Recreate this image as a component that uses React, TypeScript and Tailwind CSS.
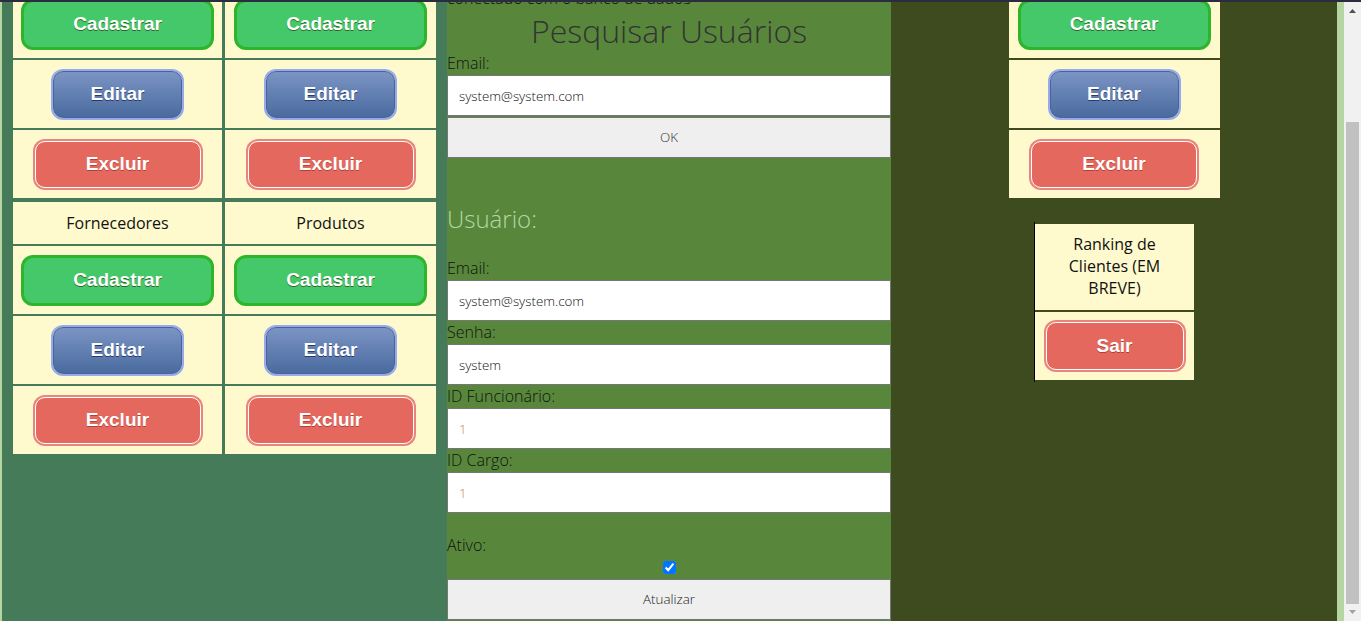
import { useLayoutEffect, useRef } from 'react';

const openSans = "font-['Open_Sans',sans-serif]";
const arial = "font-['Liberation_Sans',Arial,sans-serif]";

function Cadastrar() {
  return (
    <button
      className={`${arial} w-[193px] h-[51px] rounded-[12px] border-[3px] border-[#2eb52c] bg-[#45c869] text-white text-[19px] font-bold [text-shadow:0_1px_0_#2f6627]`}
    >
      Cadastrar
    </button>
  );
}

function Editar() {
  return (
    <button
      className={`${arial} w-[129px] h-[47px] rounded-[10px] border border-[#4e6096] bg-gradient-to-b from-[#7b94c4] to-[#4a6b9f] shadow-[0_0_0_2px_#93acef] text-white text-[19px] font-bold [text-shadow:0_1px_0_#283966]`}
    >
      Editar
    </button>
  );
}

function Vermelho({ label, w }: { label: string; w: string }) {
  return (
    <button
      className={`${arial} ${w} rounded-[10px] border border-white bg-[#e4685d] shadow-[0_0_0_2px_#ea857d] text-white text-[19px] font-bold [text-shadow:0_1px_0_#b23e35]`}
    >
      {label}
    </button>
  );
}

function Cell({ children, h }: { children: React.ReactNode; h: string }) {
  return (
    <div className={`bg-[#fffacd] ${h} flex items-center justify-center text-center`}>{children}</div>
  );
}

function Grupo({ titulos }: { titulos: string[] }) {
  return (
    <div className="grid grid-cols-[209px_211px] gap-x-[3px] gap-y-[2px] p-[2px]">
      {titulos.map((t) => (
        <Cell key={t} h="h-[42px]">
          <span className={`${openSans} text-[16px] text-[#111]`}>{t}</span>
        </Cell>
      ))}
      {titulos.map((t) => (
        <Cell key={t + 'c'} h="h-[68px]">
          <Cadastrar />
        </Cell>
      ))}
      {titulos.map((t) => (
        <Cell key={t + 'e'} h="h-[68px]">
          <Editar />
        </Cell>
      ))}
      {titulos.map((t) => (
        <Cell key={t + 'x'} h="h-[68px]">
          <Vermelho label="Excluir" w="w-[166px] h-[47px]" />
        </Cell>
      ))}
    </div>
  );
}

function Campo({ label, value, numero }: { label: string; value: string; numero?: boolean }) {
  return (
    <>
      <label className="block text-[16px] leading-[23px] font-light text-[#111]">{label}</label>
      <input
        readOnly
        value={value}
        className={`block w-full h-[41px] bg-white border border-[#767676] pl-[11px] text-[13.33px] font-light outline-none ${openSans} ${numero ? 'text-[#c98a4a]' : 'text-[#111]'}`}
      />
    </>
  );
}

function Seta({ cima }: { cima?: boolean }) {
  return (
    <svg width="7" height="4" viewBox="0 0 7 4">
      {cima ? <path d="M0 4 L3.5 0 L7 4 Z" fill="#505050" /> : <path d="M0 0 L7 0 L3.5 4 Z" fill="#a3a3a3" />}
    </svg>
  );
}

export default function App() {
  const scroller = useRef<HTMLDivElement>(null);

  useLayoutEffect(() => {
    if (scroller.current) scroller.current.scrollTop = 135;
  }, []);

  return (
    <div className="w-[1361px] h-[621px] overflow-hidden">
      <div className="h-[2px] bg-[#2b2c40]" />
      <div className="flex h-[619px]">
        <div ref={scroller} className="w-[1344px] h-full overflow-hidden bg-[#b5d6a0]">
          <div className="flex pl-[2px]">
            {/* menu esquerdo */}
            <div className="w-[445px] bg-[#467b5a] pt-[77px] px-[9px]">
              <Grupo titulos={['Clientes', 'Funcionários']} />
              <Grupo titulos={['Fornecedores', 'Produtos']} />
            </div>

            {/* pesquisa */}
            <div className={`w-[444px] bg-[#58873c] pt-[120px] pb-[1px] ${openSans}`}>
              <p className="text-[16px] leading-[22px] font-light text-[#111]">conectado com o banco de dados</p>
              <h1 className="text-[32px] leading-[43px] font-light text-center text-[#333]">Pesquisar Usuários</h1>
              <Campo label="Email:" value="system@system.com" />
              <button className="block w-full mt-[1px] h-[41px] bg-[#efefef] border border-[#767676] text-[13.33px] font-light text-[#333]">
                OK
              </button>

              <h2 className="mt-[44px] text-[24px] leading-[33px] font-light text-[#b5d6a0]">Usuário:</h2>
              <div className="mt-[22px]">
                <Campo label="Email:" value="system@system.com" />
                <Campo label="Senha:" value="system" />
                <Campo label="ID Funcionário:" value="1" numero />
                <Campo label="ID Cargo:" value="1" numero />
              </div>
              <label className="block mt-[21px] text-[16px] leading-[23px] font-light text-[#111]">Ativo:</label>
              <div className="h-[22px] flex justify-center">
                <input type="checkbox" defaultChecked className="mt-[4px] w-[13px] h-[13px] accent-[#0075ff]" />
              </div>
              <button className="block w-full h-[41px] bg-[#efefef] border border-[#767676] text-[13.33px] font-light text-[#222]">
                Atualizar
              </button>
            </div>

            {/* menu direito */}
            <div className="w-[446px] bg-[#3d4b1f] pt-[77px]">
              <div className="w-[215px] mx-auto flex flex-col gap-[2px] p-[2px]">
                <Cell h="h-[42px]">
                  <span className={`${openSans} text-[16px] text-[#111]`}>Cargos</span>
                </Cell>
                <Cell h="h-[68px]">
                  <Cadastrar />
                </Cell>
                <Cell h="h-[68px]">
                  <Editar />
                </Cell>
                <Cell h="h-[68px]">
                  <Vermelho label="Excluir" w="w-[166px] h-[47px]" />
                </Cell>
              </div>
              <div className="w-[160px] mx-auto mt-[22px] border-l border-black py-[2px] flex flex-col gap-[2px]">
                <Cell h="h-[86px]">
                  <span className={`${openSans} text-[16px] leading-[21.8px] text-[#111]`}>
                    Ranking de
                    <br />
                    Clientes (EM
                    <br />
                    BREVE)
                  </span>
                </Cell>
                <Cell h="h-[68px]">
                  <Vermelho label="Sair" w="w-[138px] h-[48px]" />
                </Cell>
              </div>
            </div>
          </div>
        </div>

        {/* barra de rolagem */}
        <div className="w-[17px] h-full bg-[#f1f1f1] flex flex-col items-center">
          <div className="h-[15px] w-full flex items-start justify-center pt-[7px]">
            <Seta cima />
          </div>
          <div className="mt-[105px] w-[13px] h-[482px] bg-[#c1c1c1]" />
          <div className="h-[17px] w-full flex items-start justify-center pt-[6px]">
            <Seta />
          </div>
        </div>
      </div>
    </div>
  );
}
